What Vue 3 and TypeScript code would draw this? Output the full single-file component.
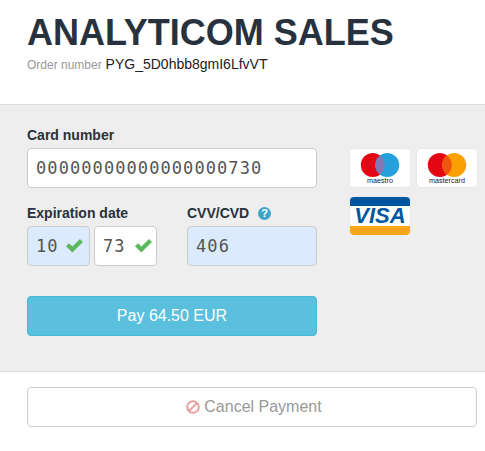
<script setup lang="ts">
const cardNumber = '00000000000000000730'
const expMonth = '10'
const expYear = '73'
const cvv = '406'
const orderNumber = 'PYG_5D0hbb8gmI6LfvVT'
const checkPath = 'M1.5 7.2 L3.8 4.9 L6.4 7.5 L12.2 1.7 L14.5 4 L6.4 12.1 Z'
</script>

<template>
  <div class="page">
    <header class="head">
      <h1>ANALYTICOM SALES</h1>
      <p class="order"><span class="order-label">Order number</span> {{ orderNumber }}</p>
    </header>

    <section class="band">
      <form class="pay-form" @submit.prevent>
        <label class="lbl">Card number</label>
        <div class="field mono">{{ cardNumber }}</div>

        <div class="row">
          <div class="col-exp">
            <label class="lbl">Expiration date</label>
            <div class="exp-fields">
              <div class="field mono small filled">
                {{ expMonth }}
                <svg class="check" viewBox="1.5 1.7 13 10.4"><path :d="checkPath" /></svg>
              </div>
              <div class="field mono small year">
                {{ expYear }}
                <svg class="check" viewBox="1.5 1.7 13 10.4"><path :d="checkPath" /></svg>
              </div>
            </div>
          </div>
          <div class="col-cvv">
            <label class="lbl">
              CVV/CVD
              <span class="help">?</span>
            </label>
            <div class="field mono filled">{{ cvv }}</div>
          </div>
        </div>

        <button class="pay" type="button">Pay 64.50 EUR</button>
      </form>

      <div class="cards">
        <div class="card">
          <svg viewBox="0 0 60 38" width="60" height="38">
            <circle cx="22.8" cy="16" r="12" fill="#e30613" />
            <circle cx="37.2" cy="16" r="12" fill="#25a0dc" />
            <path d="M30 6.4 a12 12 0 0 1 0 19.2 a12 12 0 0 1 0-19.2 Z" fill="#8478b4" />
            <text x="30" y="34" class="card-text">maestro</text>
          </svg>
        </div>
        <div class="card">
          <svg viewBox="0 0 60 38" width="60" height="38">
            <circle cx="22.8" cy="16" r="12" fill="#e30613" />
            <circle cx="37.2" cy="16" r="12" fill="#f9a000" />
            <path d="M30 6.4 a12 12 0 0 1 0 19.2 a12 12 0 0 1 0-19.2 Z" fill="#f0560f" />
            <text x="30" y="34" class="card-text">mastercard</text>
          </svg>
        </div>
        <div class="card visa">
          <div class="visa-top"></div>
          <div class="visa-mid">VISA</div>
          <div class="visa-bot"></div>
        </div>
      </div>
    </section>

    <footer class="foot">
      <button class="cancel" type="button">
        <svg class="ban" viewBox="0 0 14 14">
          <circle cx="7" cy="7" r="5.8" />
          <path d="M3 11 L11 3" />
        </svg>
        Cancel Payment
      </button>
    </footer>
  </div>
</template>

<style>
html, body {
  margin: 0;
  background: #fff;
}
</style>

<style scoped>
.page {
  font-family: "Liberation Sans", Arial, sans-serif;
  color: #28323c;
}

.head {
  height: 104px;
  box-sizing: border-box;
  padding: 12px 27px 0;
}

h1 {
  margin: 0;
  font-size: 36px;
  line-height: 42px;
  font-weight: 700;
  color: #28323e;
}

.order {
  margin: 0;
  font-size: 14px;
  line-height: 20px;
  color: #222;
}

.order-label {
  font-size: 12px;
  color: #999;
}

.band {
  height: 268px;
  box-sizing: border-box;
  background: #eee;
  border-top: 1px solid #ddd;
  border-bottom: 1px solid #ddd;
  padding: 22px 0 0 27px;
  display: flex;
}

.pay-form {
  width: 290px;
}

.lbl {
  display: block;
  font-size: 14px;
  line-height: 16px;
  font-weight: 700;
  color: #28323c;
  margin-bottom: 5px;
}

.field {
  height: 40px;
  box-sizing: border-box;
  background: #fff;
  border: 1px solid #ccc;
  border-radius: 4px;
  padding: 0 8px;
  display: flex;
  align-items: center;
  justify-content: space-between;
}

.mono {
  font-family: "DejaVu Sans Mono", monospace;
  font-size: 17px;
  letter-spacing: 1.08px;
  color: #555;
}

.filled {
  background: #dbeafd;
}

.small {
  width: 63px;
  padding-right: 6px;
}

.year {
  padding-right: 4px;
}

.check {
  width: 17px;
  height: 13.6px;
  fill: #5cb85c;
}

.row {
  display: flex;
  margin-top: 17px;
}

.col-exp {
  width: 160px;
}

.exp-fields {
  display: flex;
  gap: 4px;
}

.col-cvv {
  width: 130px;
}

.help {
  display: inline-block;
  width: 13px;
  height: 13px;
  margin-left: 5px;
  border-radius: 50%;
  background: #3ea5c9;
  color: #fff;
  font-size: 11px;
  line-height: 13px;
  text-align: center;
  vertical-align: 1px;
}

.pay {
  display: block;
  width: 100%;
  height: 40px;
  margin-top: 30px;
  border: 1px solid #46b8da;
  border-radius: 4px;
  background: #5bc0de;
  color: #fff;
  font-family: inherit;
  font-size: 16px;
  padding: 0;
}

.cards {
  width: 135px;
  margin: 22px 0 0 33px;
  display: flex;
  flex-wrap: wrap;
  align-content: flex-start;
  gap: 10px 7px;
}

.card {
  width: 60px;
  height: 38px;
  background: #fff;
  border-radius: 4px;
  box-shadow: 0 0 2px rgba(0, 0, 0, 0.08);
  overflow: hidden;
}

.card svg {
  display: block;
}

.card-text {
  font-family: "Liberation Sans", Arial, sans-serif;
  font-size: 7.2px;
  text-anchor: middle;
  fill: #222;
}

.visa {
  display: flex;
  flex-direction: column;
}

.visa-top {
  height: 9px;
  background: #00579f;
}

.visa-mid {
  flex: 1;
  text-align: center;
  font-size: 22px;
  line-height: 20px;
  font-weight: 700;
  font-style: italic;
  color: #00579f;
}

.visa-bot {
  height: 9px;
  background: #faa61a;
}

.foot {
  padding: 15px 8px 0 27px;
}

.cancel {
  display: flex;
  align-items: center;
  justify-content: center;
  gap: 4px;
  width: 100%;
  height: 40px;
  box-sizing: border-box;
  background: #fff;
  border: 1px solid #ccc;
  border-radius: 4px;
  color: #999;
  font-family: inherit;
  font-size: 16px;
  padding: 0 0 0 4px;
}

.ban {
  width: 14px;
  height: 14px;
  fill: none;
  stroke: #e8a0a0;
  stroke-width: 2;
}
</style>
